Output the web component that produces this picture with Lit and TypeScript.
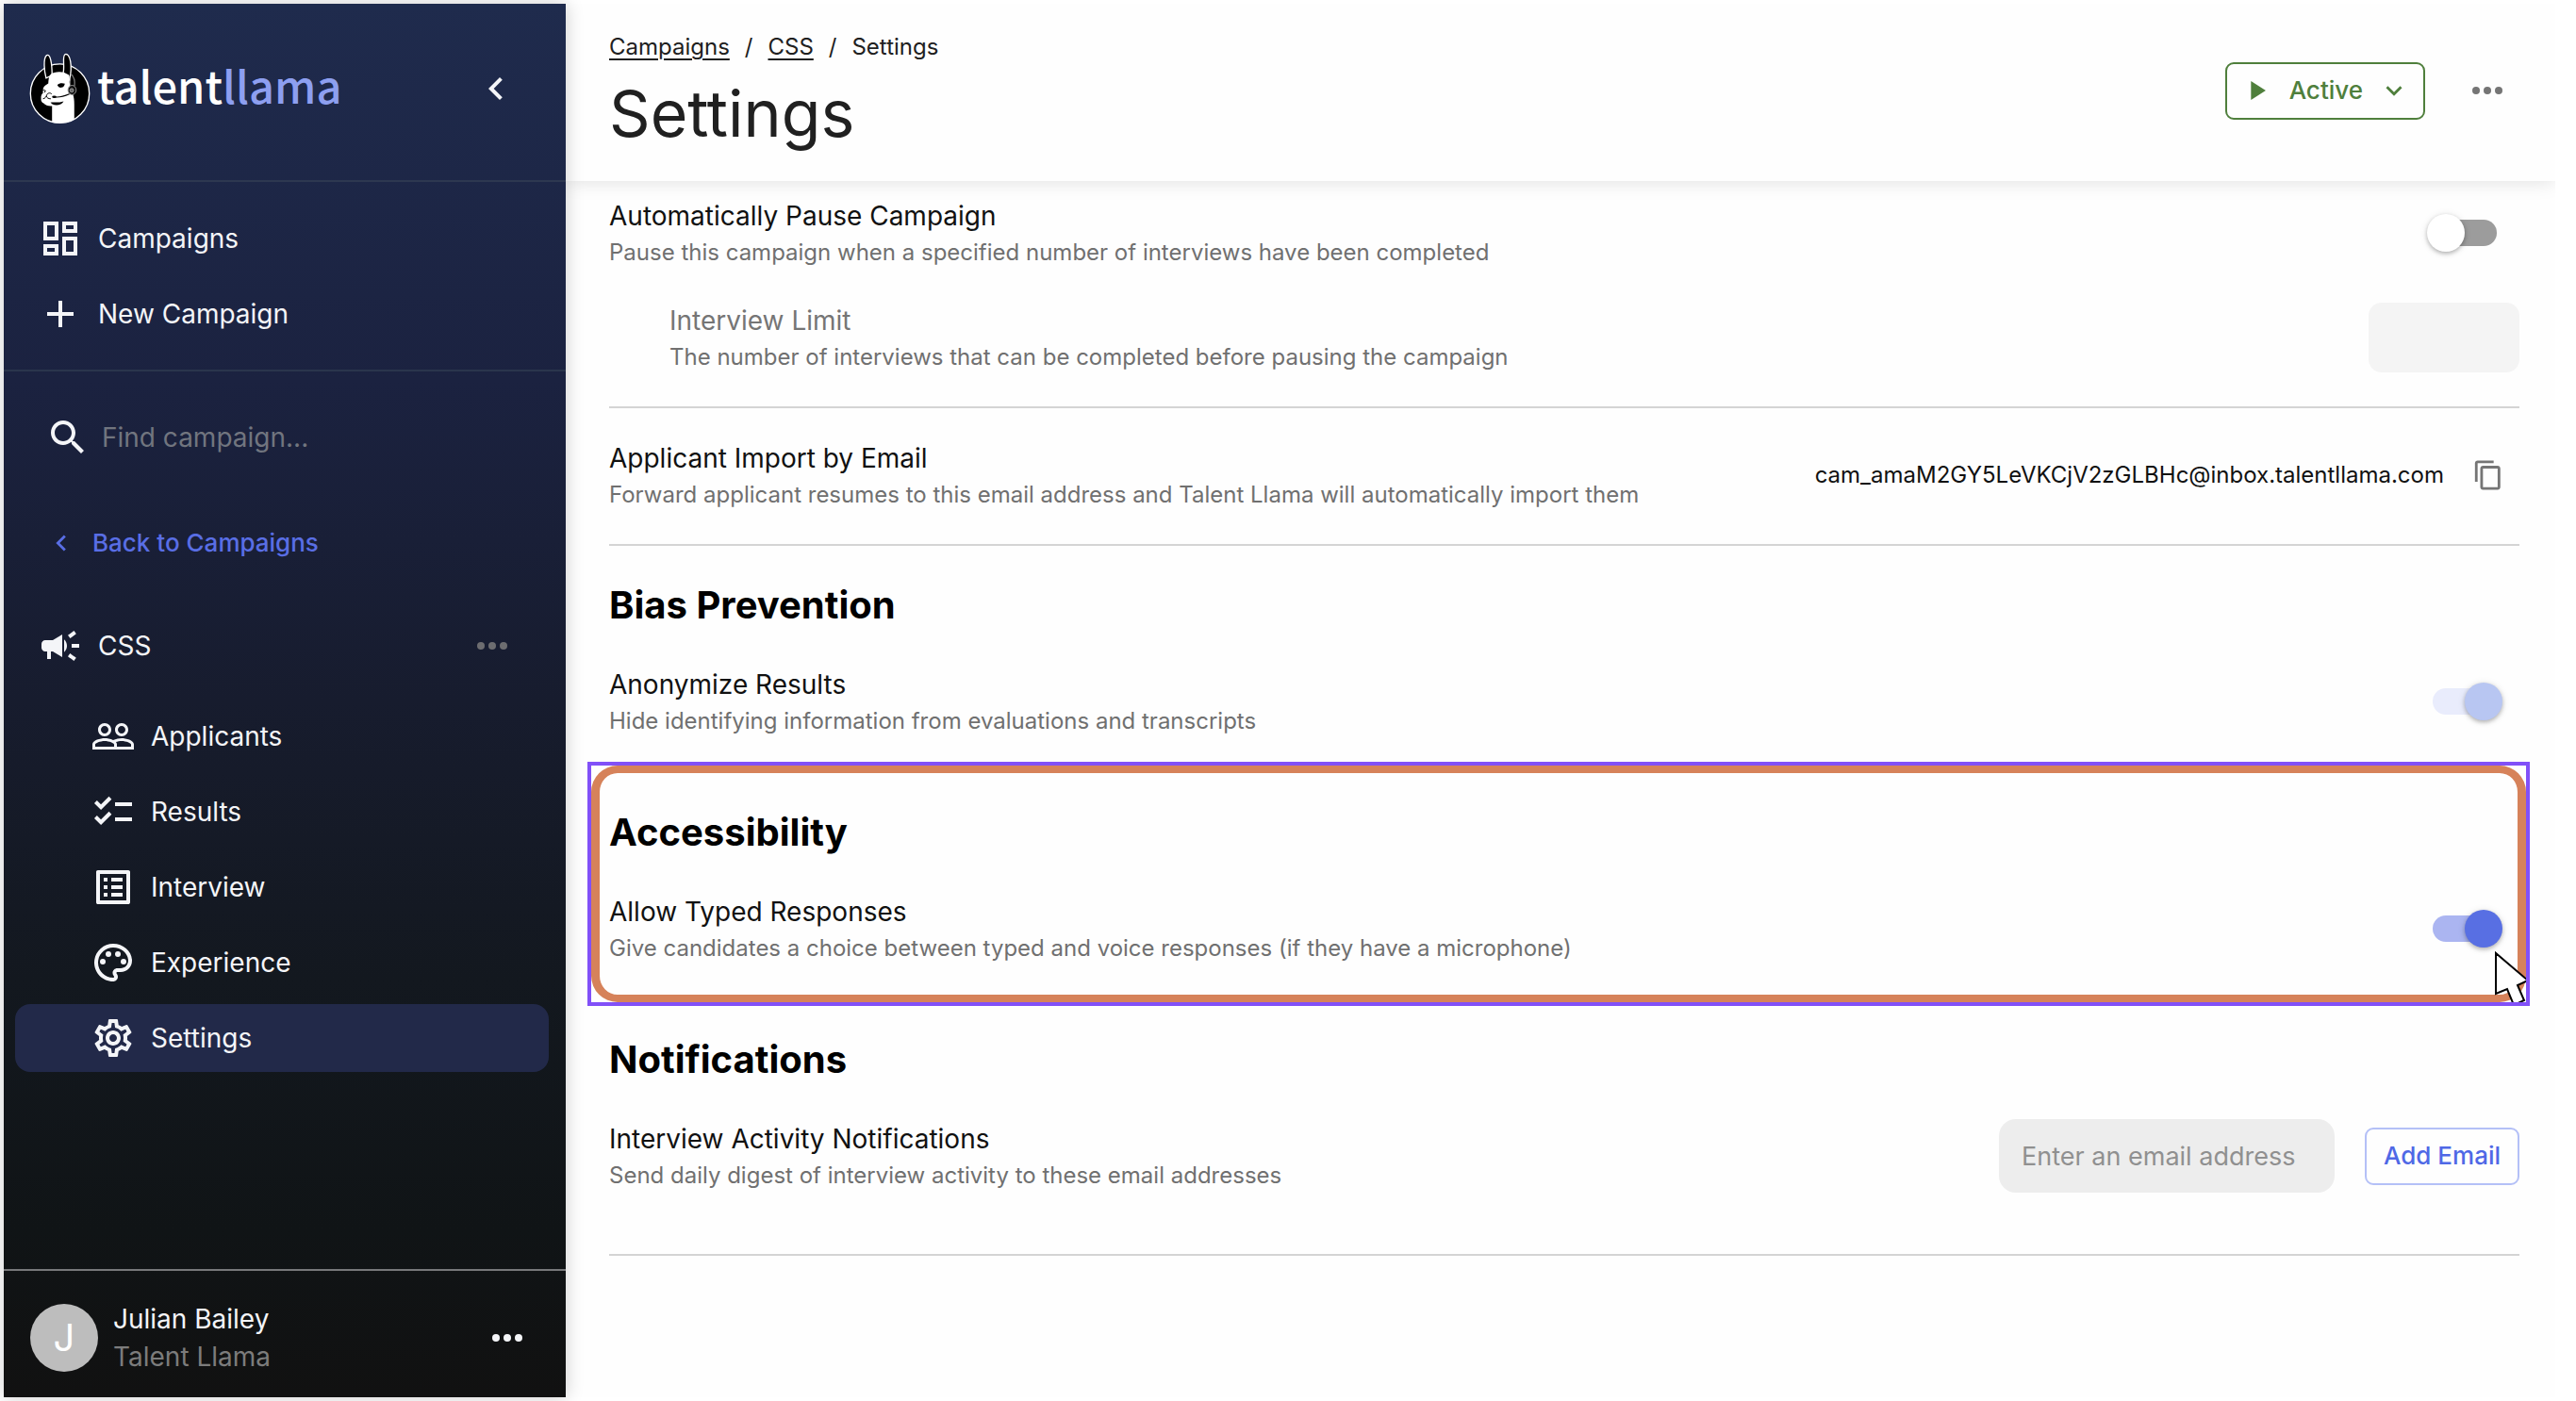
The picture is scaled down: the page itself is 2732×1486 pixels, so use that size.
import { LitElement, html, css, svg, nothing } from "lit";
import { customElement, property } from "lit/decorators.js";

const ICONS = {
  dashboard: svg`<path d="M19 5v2h-4V5h4M9 5v6H5V5h4m10 8v6h-4v-6h4M9 17v2H5v-2h4M21 3h-8v6h8V3zM11 3H3v10h8V3zm10 8h-8v10h8V11zm-10 4H3v6h8v-6z"/>`,
  add: svg`<path d="M19 13h-6v6h-2v-6H5v-2h6V5h2v6h6v2z"/>`,
  search: svg`<path d="M15.5 14h-.79l-.28-.27C15.41 12.59 16 11.11 16 9.5 16 5.91 13.09 3 9.5 3S3 5.91 3 9.5 5.91 16 9.5 16c1.61 0 3.09-.59 4.23-1.57l.27.28v.79l5 4.99L20.49 19l-4.99-5zm-6 0C7.01 14 5 11.99 5 9.5S7.01 5 9.5 5 14 7.01 14 9.5 11.99 14 9.5 14z"/>`,
  left: svg`<path d="M15.41 7.41 14 6l-6 6 6 6 1.41-1.41L10.83 12z"/>`,
  down: svg`<path d="M7.41 8.59 12 13.17l4.59-4.58L18 10l-6 6-6-6z"/>`,
  play: svg`<path d="M8 5v14l11-7z"/>`,
  campaign: svg`<path d="M18 11v2h4v-2h-4zm-2 6.61c.96.71 2.21 1.65 3.2 2.39.4-.53.8-1.07 1.2-1.6-.99-.74-2.24-1.68-3.2-2.4-.4.54-.8 1.08-1.2 1.61zM20.4 5.6c-.4-.53-.8-1.07-1.2-1.6-.99.74-2.24 1.68-3.2 2.4.4.53.8 1.07 1.2 1.6.96-.72 2.21-1.65 3.2-2.4zM4 9c-1.1 0-2 .9-2 2v2c0 1.1.9 2 2 2h1v4h2v-4h1l5 3V6L8 9H4zm11.5 3c0-1.33-.58-2.53-1.5-3.35v6.69c.92-.81 1.5-2.01 1.5-3.34z"/>`,
  more: svg`<circle cx="6" cy="12" r="2"/><circle cx="12" cy="12" r="2"/><circle cx="18" cy="12" r="2"/>`,
  people: svg`<path d="M16.5 13c-1.2 0-3.07.34-4.5 1-1.43-.67-3.3-1-4.5-1C5.33 13 1 14.08 1 16.25V19h22v-2.75c0-2.17-4.33-3.25-6.5-3.25zm-4 4.5h-10v-1.25c0-.54 2.56-1.75 5-1.75s5 1.21 5 1.75v1.25zm9 0H14v-1.25c0-.46-.2-.86-.52-1.22.88-.3 1.96-.53 3.02-.53 2.44 0 5 1.21 5 1.75v1.25zM7.5 12c1.93 0 3.5-1.57 3.5-3.5S9.43 5 7.5 5 4 6.57 4 8.5 5.57 12 7.5 12zm0-5.5c1.1 0 2 .9 2 2s-.9 2-2 2-2-.9-2-2 .9-2 2-2zm9 5.5c1.93 0 3.5-1.57 3.5-3.5S18.43 5 16.5 5 13 6.57 13 8.5s1.57 3.5 3.5 3.5zm0-5.5c1.1 0 2 .9 2 2s-.9 2-2 2-2-.9-2-2 .9-2 2-2z"/>`,
  checklist: svg`<path d="M22 7h-9v2h9V7zm0 8h-9v2h9v-2zM5.54 11 2 7.46l1.41-1.41 2.12 2.12 4.24-4.24 1.41 1.41L5.54 11zm0 8L2 15.46l1.41-1.41 2.12 2.12 4.24-4.24 1.41 1.41L5.54 19z"/>`,
  list: svg`<path d="M19 5v14H5V5h14m1.1-2H3.9c-.5 0-.9.4-.9.9v16.2c0 .4.4.9.9.9h16.2c.4 0 .9-.5.9-.9V3.9c0-.5-.5-.9-.9-.9zM11 7h6v2h-6V7zm0 4h6v2h-6v-2zm0 4h6v2h-6zM7 7h2v2H7zm0 4h2v2H7zm0 4h2v2H7z"/>`,
  palette: svg`<path d="M12 22C6.49 22 2 17.51 2 12S6.49 2 12 2s10 4.04 10 9c0 3.31-2.69 6-6 6h-1.77c-.28 0-.5.22-.5.5 0 .12.05.23.13.33.41.47.64 1.06.64 1.67 0 1.38-1.12 2.5-2.5 2.5zm0-18c-4.41 0-8 3.59-8 8s3.59 8 8 8c.28 0 .5-.22.5-.5 0-.16-.08-.28-.14-.35-.41-.46-.63-1.05-.63-1.65 0-1.38 1.12-2.5 2.5-2.5H16c2.21 0 4-1.79 4-4 0-3.86-3.59-7-8-7z"/><circle cx="6.5" cy="11.5" r="1.5"/><circle cx="9.5" cy="7.5" r="1.5"/><circle cx="14.5" cy="7.5" r="1.5"/><circle cx="17.5" cy="11.5" r="1.5"/>`,
  settings: svg`<path d="M19.43 12.98c.04-.32.07-.64.07-.98 0-.34-.03-.66-.07-.98l2.11-1.65c.19-.15.24-.42.12-.64l-2-3.46c-.09-.16-.26-.25-.44-.25-.06 0-.12.01-.17.03l-2.49 1c-.52-.4-1.08-.73-1.69-.98l-.38-2.65C14.46 2.18 14.25 2 14 2h-4c-.25 0-.46.18-.49.42l-.38 2.65c-.61.25-1.17.59-1.69.98l-2.49-1c-.06-.02-.12-.03-.18-.03-.17 0-.34.09-.43.25l-2 3.46c-.13.22-.07.49.12.64l2.11 1.65c-.04.32-.07.65-.07.98 0 .33.03.66.07.98l-2.11 1.65c-.19.15-.24.42-.12.64l2 3.46c.09.16.26.25.44.25.06 0 .12-.01.17-.03l2.49-1c.52.4 1.08.73 1.69.98l.38 2.65c.03.24.24.42.49.42h4c.25 0 .46-.18.49-.42l.38-2.65c.61-.25 1.17-.59 1.69-.98l2.49 1c.06.02.12.03.18.03.17 0 .34-.09.43-.25l2-3.46c.12-.22.07-.49-.12-.64l-2.11-1.65zm-1.98-1.71c.04.31.05.52.05.73 0 .21-.02.43-.05.73l-.14 1.13.89.7 1.08.84-.7 1.21-1.27-.51-1.04-.42-.9.68c-.43.32-.84.56-1.25.73l-1.06.43-.16 1.13-.2 1.35h-1.4l-.19-1.35-.16-1.13-1.06-.43c-.43-.18-.83-.41-1.23-.71l-.91-.7-1.06.43-1.27.51-.7-1.21 1.08-.84.89-.7-.14-1.13c-.03-.31-.05-.54-.05-.74s.02-.43.05-.73l.14-1.13-.89-.7-1.08-.84.7-1.21 1.27.51 1.04.42.9-.68c.43-.32.84-.56 1.25-.73l1.06-.43.16-1.13.2-1.35h1.39l.19 1.35.16 1.13 1.06.43c.43.18.83.41 1.23.71l.91.7 1.06-.43 1.27-.51.7 1.21-1.07.85-.89.7.14 1.13zM12 8c-2.21 0-4 1.79-4 4s1.79 4 4 4 4-1.79 4-4-1.79-4-4-4zm0 6c-1.1 0-2-.9-2-2s.9-2 2-2 2 .9 2 2-.9 2-2 2z"/>`,
  copy: svg`<path d="M16 1H4c-1.1 0-2 .9-2 2v14h2V3h12V1zm3 4H8c-1.1 0-2 .9-2 2v14c0 1.1.9 2 2 2h11c1.1 0 2-.9 2-2V7c0-1.1-.9-2-2-2zm0 16H8V7h11v14z"/>`,
};
type IconName = keyof typeof ICONS;

const icon = (name: IconName, size = "") =>
  html`<svg class="icon ${size}" viewBox="0 0 24 24" aria-hidden="true">${ICONS[name]}</svg>`;

const base = css`
  * { box-sizing: border-box; }
  a { color: inherit; text-decoration: none; }
  button {
    display: flex; align-items: center; margin: 0; padding: 0;
    border: 0; background: none; color: inherit; font: inherit; cursor: pointer;
  }
  input { margin: 0; border: 0; font: inherit; color: inherit; min-width: 0; }
  .icon { display: block; flex: none; width: 48px; height: 48px; fill: currentColor; }
  .icon.small { width: 34px; height: 34px; }
`;

@customElement("llama-logo")
export class LlamaLogo extends LitElement {
  static styles = css`
    :host { display: block; flex: none; }
    .art { display: block; width: 67px; height: 77px; }
  `;
  render() {
    return html`<svg class="art" viewBox="30 42 200 232" aria-hidden="true">
      <circle cx="130" cy="175" r="94" fill="#000" stroke="#fff" stroke-width="4"/>
      <path d="M86 126C80 104 76 62 88 53c11-7 17 24 17 64z" fill="#000" stroke="#fff" stroke-width="4"/>
      <path d="M140 112C147 90 136 54 147 50c16-5 24 36 14 82z" fill="#000" stroke="#fff" stroke-width="4"/>
      <path d="M100 114c8-8 30-10 44-6l15 8c3 6 2 16 2 24 1 12 5 26 10 36 4 10 5 20 5 34v48c-22 12-48 14-71 9v-52c-12 1-21-3-27-9-6-2-9-8-8-14-1-8 1-14 6-18-1-10 0-20 8-25l9-6c1-12 1-22 7-29z" fill="#fff"/>
      <path d="M122 148c5-6 16-7 24-4-2 8-5 12-11 12-6 1-11-3-13-8z" fill="#000"/>
      <path d="M74 166c3-3 7-2 10 0l-3 6M104 177c-5-6-14-3-16 3s-4 10-12 12M87 184c2 5 6 8 14 8" fill="none" stroke="#000" stroke-width="3"/>
      <path d="M100 204c10-2 26 2 42-4-6 12-24 15-36 9z" fill="#000"/>
      <path d="M112 186c14 2 32-2 48-9" fill="none" stroke="#000" stroke-width="3.500" stroke-linecap="round"/>
      <ellipse cx="112" cy="186" rx="7" ry="4" fill="#000"/>
      <path d="M165 112c9 8 14 22 12 40" fill="none" stroke="#777" stroke-width="4"/>
      <path d="M163 124v28" fill="none" stroke="#aaa" stroke-width="2"/>
      <ellipse cx="169" cy="164" rx="13" ry="15" fill="#111" stroke="#999" stroke-width="3"/>
      <circle cx="168" cy="165" r="6" fill="#666" stroke="#bbb" stroke-width="2"/>
    </svg>`;
  }
}

@customElement("side-nav")
export class SideNav extends LitElement {
  static styles = [base, css`
    :host {
      display: flex; flex-direction: column; flex: none; width: 596px;
      position: relative; z-index: 2; color: #f4f5f8;
      font-size: 28px; line-height: 40px;
      background: linear-gradient(#1f2b4d 0%, #1b2240 27%, #171c2e 50%, #13181f 70%, #101416 88%, #111 100%);
      box-shadow: 0 0 18px rgba(0, 0, 0, 0.2);
    }
    .brand {
      display: flex; align-items: center; height: 189px; padding: 0 50px 8px 26px;
      border-bottom: 2px solid #2d3850;
    }
    .name {
      flex: 1; padding: 0 0 8px 6px; color: #fff;
      font: 500 47px/60px "Noto Sans CJK SC", "Noto Sans", sans-serif;
    }
    .accent { color: #8d9ff0; }
    .group { padding: 24px 18px 0 12px; }
    .group.lined { border-bottom: 2px solid #2a354c; height: 201px; }
    .item {
      display: flex; align-items: center; gap: 16px; height: 72px; margin-bottom: 8px;
      padding: 0 36px 0 24px; border-radius: 16px;
    }
    .item.sub { padding-left: 80px; }
    .item.on { background: #222949; }
    .grow { flex: 1; }
    .search { display: flex; align-items: center; gap: 12px; height: 72px; margin: 34px 44px 0; }
    .field { flex: 1; padding: 0; background: none; outline: 0; }
    .field::placeholder { color: #71757f; opacity: 1; }
    .back {
      display: flex; align-items: center; gap: 16px; height: 72px; margin: 40px 44px 37px;
      color: #596ee5; font-size: 26px; font-weight: 500;
    }
    .dim { color: #6d6d70; }
    .tree { display: flex; flex-direction: column; padding: 0 18px 0 12px; }
    .head { margin-bottom: 24px; }
    .user {
      display: flex; align-items: center; gap: 16px; height: 136px; margin-top: auto;
      padding: 8px 38px 0 28px; border-top: 2px solid #77787a;
    }
    .avatar {
      display: grid; place-items: center; width: 72px; height: 72px; border-radius: 50%;
      background: #bdbdbd; color: #fff; font-size: 40px;
    }
    .org { color: #7c7c7c; }
  `];

  private links: [IconName, string][] = [
    ["people", "Applicants"], ["checklist", "Results"], ["list", "Interview"],
    ["palette", "Experience"], ["settings", "Settings"],
  ];

  render() {
    return html`
      <div class="brand">
        <llama-logo></llama-logo>
        <div class="name">talent<span class="accent">llama</span></div>
        <button aria-label="Collapse sidebar">${icon("left")}</button>
      </div>
      <nav class="group lined">
        <a class="item" href="#campaigns">${icon("dashboard")}Campaigns</a>
        <a class="item" href="#new">${icon("add")}New Campaign</a>
      </nav>
      <label class="search">${icon("search")}
        <input class="field" type="search" placeholder="Find campaign..." aria-label="Find campaign">
      </label>
      <a class="back" href="#campaigns">${icon("left", "small")}Back to Campaigns</a>
      <nav class="tree">
        <div class="item head">${icon("campaign")}<span class="grow">CSS</span>
          <button class="dim" aria-label="Campaign menu">${icon("more")}</button>
        </div>
        ${this.links.map(([name, label]) => html`
          <a class="item sub ${label === "Settings" ? "on" : ""}" href="#${label.toLowerCase()}">${icon(name)}${label}</a>`)}
      </nav>
      <div class="user">
        <div class="avatar">J</div>
        <div class="grow"><div>Julian Bailey</div><div class="org">Talent Llama</div></div>
        <button aria-label="Account menu">${icon("more")}</button>
      </div>`;
  }
}

@customElement("setting-row")
export class SettingRow extends LitElement {
  @property() label = "";
  @property() note = "";
  @property({ type: Boolean }) toggle = false;
  @property({ type: Boolean }) checked = false;
  @property({ type: Boolean }) disabled = false;
  @property({ type: Boolean }) muted = false;

  static styles = [base, css`
    :host { display: flex; align-items: center; justify-content: space-between; height: 78px; }
    .label { display: block; font-size: 28px; line-height: 42px; color: #111; }
    .label.muted { color: #757575; }
    .note { font-size: 24px; line-height: 36px; color: #707070; }
    .side { display: flex; align-items: center; }
    .switch {
      appearance: none; display: flex; align-items: center; width: 68px; height: 28px;
      margin-right: 24px; border-radius: 14px; background: #9c9c9c; cursor: pointer;
    }
    .switch::before {
      content: ""; flex: none; width: 40px; height: 40px; margin-left: -6px; border-radius: 50%;
      background: #fff; box-shadow: 0 2px 4px rgba(0, 0, 0, 0.25), 0 1px 8px rgba(0, 0, 0, 0.1);
    }
    .switch:checked { background: #abb5f1; }
    .switch:checked::before { margin-left: 34px; background: #586fe3; }
    .switch:checked:disabled { background: #e9ecfc; }
    .switch:checked:disabled::before { background: #b8c6f2; }
  `];

  render() {
    return html`
      <div>
        <label class="label ${this.muted ? "muted" : ""}" for="control">${this.label}</label>
        <div class="note">${this.note}</div>
      </div>
      <div class="side">
        ${this.toggle
          ? html`<input id="control" class="switch" type="checkbox" role="switch" .checked=${this.checked} ?disabled=${this.disabled}>`
          : nothing}
        <slot></slot>
      </div>`;
  }
}

@customElement("app-root")
export class AppRoot extends LitElement {
  static styles = [base, css`
    :host {
      display: block; background: #fff; color: #202020;
      font-family: Inter, "Liberation Sans", sans-serif; font-size: 28px; line-height: 40px;
    }
    .frame { display: flex; min-height: 100vh; padding: 4px 22px 4px 4px; }
    .main { flex: 1; min-width: 0; overflow: hidden; background: #fefefe; }
    .top {
      display: flex; align-items: center; justify-content: space-between; height: 188px;
      padding: 0 48px 4px 46px; background: #fefefe; box-shadow: 0 0 20px rgba(0, 0, 0, 0.13);
    }
    .heads { padding-top: 4px; }
    .crumbs { display: flex; gap: 16px; font-size: 24px; line-height: 32px; }
    .crumb { text-decoration: underline; text-decoration-thickness: 2px; text-underline-offset: 4px; }
    .title { margin: 12px 0 0; font-size: 68px; line-height: 84px; font-weight: 400; }
    .actions { display: flex; align-items: center; gap: 42px; color: #757575; }
    .status {
      height: 61px; padding: 0 14px; border: 2px solid #4f7f3c; border-radius: 9px;
      color: #4f7f3c; font-size: 26px; font-weight: 500;
    }
    .word { padding: 0 16px 0 18px; }
    .body { padding: 16px 38px 0 46px; }
    .limit { margin: 33px 0 0 64px; }
    .rule { height: 2px; margin: 0; border: 0; background: #d4d4d4; }
    .rule.a { margin: 34px 0 32px; }
    .rule.b { margin: 34px 0 0; }
    .rule.c { margin: 28px 0 0; }
    .number { width: 160px; height: 74px; padding: 0 24px; border-radius: 14px; background: #f4f4f4; }
    .address { color: #111; font-size: 24px; }
    .copy { margin: 0 16px 0 30px; color: #757575; }
    .section { position: relative; padding: 39px 0 37px; }
    .heading { margin: 0 0 39px; font-size: 40px; line-height: 48px; font-weight: 700; color: #000; }
    .email {
      width: 356px; height: 78px; margin-right: 32px; padding: 0 24px; border-radius: 18px;
      background: #ededed; outline: 0; font-size: 27px;
    }
    .email::placeholder { color: #909090; opacity: 1; }
    .submit {
      height: 61px; padding: 0 18px; border: 2px solid #b4c0f7; border-radius: 9px;
      color: #4f68e6; font-size: 26px; font-weight: 500;
    }
    .mark {
      position: absolute; inset: -12px -11px -6px -23px; overflow: hidden;
      border: 4px solid #8150f8; pointer-events: none;
    }
    .ring { height: 100%; border: 9px solid #d6825a; border-width: 8px 9px; border-radius: 28px; }
    .cursor { position: absolute; right: -4px; bottom: -3px; width: 38px; height: 58px; }
  `];

  render() {
    return html`<div class="frame">
      <side-nav></side-nav>
      <main class="main">
        <header class="top">
          <div class="heads">
            <nav class="crumbs">
              <a class="crumb" href="#campaigns">Campaigns</a><span>/</span>
              <a class="crumb" href="#css">CSS</a><span>/</span><span>Settings</span>
            </nav>
            <h1 class="title">Settings</h1>
          </div>
          <div class="actions">
            <button class="status">${icon("play", "small")}<span class="word">Active</span>${icon("down", "small")}</button>
            <button aria-label="More actions">${icon("more")}</button>
          </div>
        </header>
        <div class="body">
          <setting-row toggle label="Automatically Pause Campaign"
            note="Pause this campaign when a specified number of interviews have been completed"></setting-row>
          <setting-row class="limit" muted label="Interview Limit"
            note="The number of interviews that can be completed before pausing the campaign">
            <input class="number" type="text" inputmode="numeric" aria-label="Interview Limit" disabled>
          </setting-row>
          <hr class="rule a">
          <setting-row label="Applicant Import by Email"
            note="Forward applicant resumes to this email address and Talent Llama will automatically import them">
            <span class="address">cam_amaM2GY5LeVKCjV2zGLBHc@inbox.talentllama.com</span>
            <button class="copy" aria-label="Copy address">${icon("copy", "small")}</button>
          </setting-row>
          <hr class="rule b">
          <section class="section">
            <h2 class="heading">Bias Prevention</h2>
            <setting-row toggle checked disabled label="Anonymize Results"
              note="Hide identifying information from evaluations and transcripts"></setting-row>
          </section>
          <section class="section">
            <h2 class="heading">Accessibility</h2>
            <setting-row toggle checked label="Allow Typed Responses"
              note="Give candidates a choice between typed and voice responses (if they have a microphone)"></setting-row>
            <div class="mark">
              <div class="ring"></div>
              <svg class="cursor" viewBox="0 0 38 58" aria-hidden="true">
                <path d="M2 3v43l12-5 7 17 11-5-7-16 11-5z" fill="#fff" stroke="#000" stroke-width="2"/>
              </svg>
            </div>
          </section>
          <section class="section">
            <h2 class="heading">Notifications</h2>
            <setting-row label="Interview Activity Notifications"
              note="Send daily digest of interview activity to these email addresses">
              <input class="email" type="email" placeholder="Enter an email address" aria-label="Email address">
              <button class="submit">Add Email</button>
            </setting-row>
          </section>
          <hr class="rule c">
        </div>
      </main>
    </div>`;
  }
}
